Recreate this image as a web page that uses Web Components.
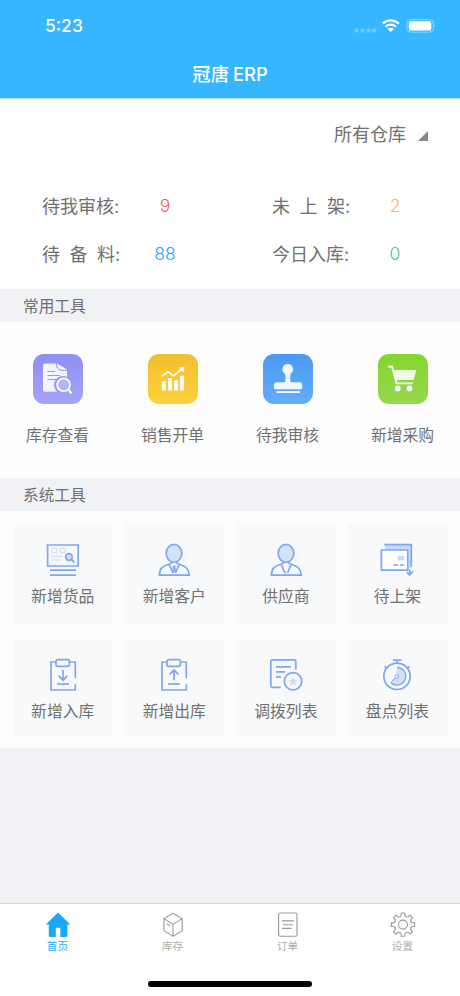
<!DOCTYPE html>
<html lang="zh-CN">
<head>
<meta charset="utf-8">
<title>冠唐 ERP</title>
<style>
html,body{margin:0;padding:0}
body{width:460px;height:996px;overflow:hidden;background:#f0f2f6;font-family:"Inter","Noto Sans CJK SC",sans-serif;font-weight:400;color:#707070}
</style>
</head>
<body>
<erp-app></erp-app>
<script>
const make = (name, html) => {
  const t = document.createElement('template');
  t.innerHTML = html;
  customElements.define(name, class extends HTMLElement {
    constructor() {
      super();
      this.attachShadow({ mode: 'open' }).append(t.content.cloneNode(true));
    }
    connectedCallback() {
      const g = this.shadowRoot.querySelector('[data-icon]');
      if (g) g.innerHTML = ICONS[this.getAttribute('icon')] || '';
    }
  });
};

const person = `<ellipse cx="20" cy="11.4" rx="7.8" ry="9" fill="#d3e2fc"/><path d="M15 22.2C9 23.7 5.4 26 5.4 33.2H35.2C35.2 26 31 23.7 25.2 22.2M15 22.2 19 31M25.2 22.2 21.6 31M15 22.2 18.2 20.5M25.2 22.2 22 20.5"/>`;
const board = `<path d="M13 5H8V33H32.3V27.2M32.3 21V5H27"/><rect x="13" y="2.6" width="13.4" height="6.8" rx="1.8"/><path d="M14.2 27H26"/>`;
const gear = (() => {
  let d = '';
  const P = (r, a) => (13 + r * Math.sin(a)).toFixed(2) + ' ' + (12.6 + r * Math.cos(a)).toFixed(2);
  for (let i = 0; i < 8; i++) {
    const a = i * Math.PI / 4;
    d += (i ? 'L' : 'M') + P(9.4, a - .2) + 'L' + P(11.8, a - .15) + 'L' + P(11.8, a + .15) + 'L' + P(9.4, a + .2) + 'Q' + P(7.6, a + .39) + ' ' + P(9.4, a + .585);
  }
  return d + 'Z';
})();

const ICONS = {
  stock: `<path d="M12 9.5H24L34 15.5V23A9 9 0 0 0 24 37.8H12A2 2 0 0 1 10 35.8V11.5A2 2 0 0 1 12 9.5Z" fill="#f4f4ff"/><path d="M23.4 9.5C23.4 15 26 17 34 16.2" stroke="#8f8ef2" stroke-width="1"/><path d="M14.5 17.5H22M14.5 21.5H27M14.5 25.5H23" stroke="#9695f3"/><circle cx="30.6" cy="30.8" r="7.4" fill="#9f9efa"/><circle cx="30.6" cy="30.8" r="6.4" fill="#b4b3fa" stroke="#fff" stroke-width="1.8"/><path d="M35.5 36 38.5 39.2" stroke="#fff" stroke-width="2.2"/>`,
  sales: `<path d="M13.7 27.2h4v9.3h-4zM20 24h4v12.5h-4zM26.1 26.3h4v10.2h-4zM32.1 21.8h4v14.7h-4z" fill="#fff"/><path d="M13.7 22.4 20 17.8 25.7 22 34.2 14.6" stroke="#fff" stroke-width="1.7"/><path d="M30.8 13.6 36.5 12.8 35.8 18.4Z" fill="#fff"/>`,
  stamp: `<path d="M24.8 10A5.3 5.3 0 0 0 22 19.8Q23.2 24 22 28.3H14A3 3 0 0 0 11 31.3V33.7A1.5 1.5 0 0 0 12.5 35.2H37.8A1.5 1.5 0 0 0 39.3 33.7V31.3A3 3 0 0 0 36.3 28.3H27.7Q26.5 24 27.6 19.8A5.3 5.3 0 0 0 24.8 10Z" fill="#f1f8ff"/><path d="M13.5 38H37" stroke="#fff" stroke-width="1.8"/>`,
  cart: `<path d="M15.4 16H38.4L35.6 25.9H18.2Z" fill="#f2fbe8"/><path d="M10.3 12.6H14L18.6 29.4H35" stroke="#fff" stroke-width="1.9"/><circle cx="19.8" cy="34.4" r="2.8" fill="#fff"/><circle cx="31.4" cy="34.4" r="2.8" fill="#fff"/>`,
  goods: `<path d="M4.6 3H35.2V24H4.6ZM7 28.2H33M7 33.2H33"/><g stroke="#c3d5f7" stroke-width=".9"><path d="M9 6.4h5v4H9zM17.4 6.4h5v4h-5zM8.2 14.3H20M8.2 18H18"/></g><circle cx="26" cy="15" r="3.3" fill="#d3e2fc"/><path d="M28.6 17.8 31.3 20.4" stroke-width="2"/>`,
  client: person + `<path d="M18.6 23.6H21.6L22 29 20.1 31.2 18.2 29Z" fill="#8db0f2" stroke="none"/>`,
  supplier: person + `<path d="M19 26.5 20.2 32H19Z" fill="#b6cdf8" stroke="none"/>`,
  shelf: `<path d="M8 2.8H34.2V26H31.5V7.6H8Z" fill="#c8dafb" stroke="none"/><path d="M7.3 2.7H34.3V25"/><path d="M4.4 8H30.8V28.2H4.4Z" fill="#fff"/><path d="M20.7 14h6.6v4.4h-6.6z" fill="#c8dafb" stroke="none"/><path d="M16.2 23h5M22.7 23h4.6M32.7 27.5V33M29.8 30.2 32.7 33 36 29.2"/>`,
  inbound: board + `<path d="M20 13V23M15.6 18.8 20 23.2 24.4 18.8"/>`,
  outbound: board + `<path d="M20 23.3V13.2M15.6 17.4 20 13 24.4 17.4"/>`,
  transfer: `<path d="M29.8 12.4V4.5A1.6 1.6 0 0 0 28.2 2.9H6.4A1.6 1.6 0 0 0 4.8 4.5V28.8A1.6 1.6 0 0 0 6.4 30.4H14.8M10 9.8H25M10 14.8H19M10 19.8H15"/><circle cx="27" cy="24.3" r="8.7"/><path d="M27 19.4 28.4 22.7 32 23 29.3 25.3 30.1 28.8 27 27 23.9 28.8 24.7 25.3 22 23 25.6 22.7Z" fill="#cfdffc" stroke="none"/>`,
  count: `<circle cx="20" cy="19.3" r="13.2"/><path d="M15.8 3.1H24.4M20 3.1V6M7.6 9.2 9.8 11.6M32.4 9.2 30.2 11.6"/><path d="M20 10.3A9 9 0 1 1 13.2 25.2L19.4 19.4Z" fill="#cfdffc" stroke="none"/><path d="M20 10.5A8.8 8.8 0 1 1 14 25.8" stroke-width="1.3"/><path d="M14.2 24.8 18.6 20.6" stroke-width="1"/><circle cx="19.8" cy="19.4" r="1.7" fill="#f7f9fb" stroke-width="1"/>`,
  home: `<path d="M13 .4 25.3 12.6H22.4V23.5A1.5 1.5 0 0 1 21 25H15.3V15.8H10.8V25H5.3A1.5 1.5 0 0 1 3.8 23.5V12.6H.8Z" fill="#18a9fb" stroke="none"/>`,
  box: `<path d="M13 1.2 22.2 6.6V18.6L13 24.4 3.9 18.6V6.6ZM3.9 6.6 13 12.4 22.2 6.6M13 12.4V24.4M6.8 12 10.2 13.9"/>`,
  order: `<rect x="3.6" y="1" width="18.4" height="23.2" rx="1.8"/><path d="M7 8.9H19M8 12.8H18M7 16.4H16.5"/>`,
  gear: `<path d="${gear}"/><circle cx="13" cy="12.6" r="4.5"/>`
};

make('status-bar', `<style>
:host{display:flex;height:51px;justify-content:space-between;align-items:center;padding:0 20px 0 45px;color:#fff;font:500 17.5px/20px "Inter",sans-serif}
svg{display:block}</style>
<span>5:23</span><svg width="87" height="20" viewBox="353 15.6 87 20" fill="#fff">
<g opacity=".28"><rect x="354.5" y="28" width="4" height="4" rx="1"/><rect x="360.5" y="28" width="4" height="4" rx="1"/><rect x="366.5" y="28" width="4" height="4" rx="1"/><rect x="372" y="28" width="4" height="4" rx="1"/></g>
<g fill="none" stroke="#fff" stroke-width="2.3"><path d="M382.6 23.2A11.8 11.8 0 0 1 398.8 23.2M385.5 26.4A7.4 7.4 0 0 1 395.9 26.4"/></g><path d="M387.6 28.6A4.4 4.4 0 0 1 393.8 28.6L390.7 31.7Z"/>
<rect x="407" y="19.3" width="26.4" height="12.4" rx="3.8" fill="none" stroke="#fff" opacity=".45"/><rect x="408.8" y="20.9" width="22.5" height="9.3" rx="2.2"/><path d="M434.7 23.5Q436.3 25.5 434.7 27.5Z" opacity=".55"/></svg>`);
make('app-header', `<style>
:host{display:block;height:97.5px;background:#35b6ff;border-bottom:1px solid #b4e3ff}
h1{margin:0;height:46px;display:flex;align-items:center;justify-content:center;color:#fff;font:500 18.4px/24px "Inter","Noto Sans CJK SC",sans-serif;word-spacing:-1px}</style>
<status-bar></status-bar><h1><slot></slot></h1>`);
make('warehouse-picker', `<style>
:host{display:flex;justify-content:flex-end;align-items:center;height:69px;padding:0 32px 1px 0;font-size:18px}
svg{margin:5px 0 0 12px}</style><slot></slot><svg width="10" height="10"><path d="M10 0V10H0Z" fill="#888"/></svg>`);
make('stat-item', `<style>
:host{display:flex;align-items:center;height:48px;font-size:18px;white-space:pre}
.l{width:108px;word-spacing:-.3px}.v{width:30px;padding-top:2px;text-align:center;color:var(--c);font-size:17.5px}
::slotted(b){font-weight:350}</style>
<span class="l"><slot></slot></span><span class="v"><slot name="value"></slot></span>`);
make('stat-grid', `<style>
:host{display:grid;grid-template-columns:230px 188px;padding:12px 0 11px 42px;background:#fff}</style><slot></slot>`);
make('section-title', `<style>
:host{display:flex;align-items:center;height:33px;padding-left:23px;background:#f0f2f6;font-size:15.7px}</style><slot></slot>`);
make('tool-button', `<style>
:host{display:flex;flex-direction:column;align-items:center;font-size:15.8px;line-height:24px;gap:20px}
i{display:block;width:50px;height:50px;border-radius:11px;background:var(--bg)}svg{display:block}</style>
<i><svg data-icon width="50" height="50" fill="none"></svg></i><span><slot></slot></span>`);
make('tool-row', `<style>
:host{display:grid;grid-template-columns:repeat(4,115px);box-sizing:border-box;height:155.5px;padding-top:32px;background:#fdfdfe}</style><slot></slot>`);
make('system-tile', `<style>
:host{display:flex;flex-direction:column;align-items:center;box-sizing:border-box;padding-top:18px;background:#f7f9fb;font-size:15.8px;line-height:24px;gap:7px}
svg{display:block}</style>
<svg data-icon width="40" height="36" fill="none" stroke="#7fa7f0" stroke-width="1.7"></svg><span><slot></slot></span>`);
make('tile-grid', `<style>
:host{display:grid;grid-template-columns:repeat(4,98.4px);grid-template-rows:99px 97px;column-gap:13.2px;row-gap:16px;padding:13px 0 12px 13.5px;background:#fdfdfe}
</style><slot></slot>`);
make('tab-item', `<style>
:host{display:flex;flex-direction:column;align-items:center;width:115px;color:#adadad;font-size:10.7px;line-height:14px;gap:2px}
:host([active]){color:#2badf9}svg{display:block}</style>
<svg data-icon width="26" height="26" fill="none" stroke="#999" stroke-width="1.1" stroke-linejoin="round"></svg><span><slot></slot></span>`);
make('tab-bar', `<style>
:host{display:flex;flex-direction:column;box-sizing:border-box;height:93px;border-top:1px solid #d8d9dc;background:#fff}
nav{display:flex;padding-top:8px;height:69px}
.h{width:164px;height:6px;border-radius:3px;background:#000;margin:0 auto}</style>
<nav><slot></slot></nav><div class="h"></div>`);
make('erp-app', `<style>
:host{display:flex;flex-direction:column;width:460px;height:996px;background:#f0f2f6}
.top{background:#fff;height:190.5px}tab-bar{margin-top:auto}</style>
<app-header>冠唐 ERP</app-header>
<div class="top"><warehouse-picker>所有仓库</warehouse-picker>
<stat-grid>
<stat-item style="--c:#f0605c">待我审核:<b slot="value">9</b></stat-item>
<stat-item style="--c:#f3ba45">未&nbsp; 上&nbsp; 架:<b slot="value">2</b></stat-item>
<stat-item style="--c:#2ba6f2">待&nbsp; 备&nbsp; 料:<b slot="value">88</b></stat-item>
<stat-item style="--c:#3fcaa0">今日入库:<b slot="value">0</b></stat-item>
</stat-grid></div>
<section-title>常用工具</section-title>
<tool-row>
<tool-button icon="stock" style="--bg:linear-gradient(#908ff4,#a5a4fb)">库存查看</tool-button>
<tool-button icon="sales" style="--bg:linear-gradient(#efc02d,#ffd13b)">销售开单</tool-button>
<tool-button icon="stamp" style="--bg:linear-gradient(#4a9af3,#64abfb)">待我审核</tool-button>
<tool-button icon="cart" style="--bg:linear-gradient(#83d52f,#98d74d)">新增采购</tool-button>
</tool-row>
<section-title>系统工具</section-title>
<tile-grid>
<system-tile icon="goods">新增货品</system-tile>
<system-tile icon="client">新增客户</system-tile>
<system-tile icon="supplier">供应商</system-tile>
<system-tile icon="shelf">待上架</system-tile>
<system-tile icon="inbound">新增入库</system-tile>
<system-tile icon="outbound">新增出库</system-tile>
<system-tile icon="transfer">调拨列表</system-tile>
<system-tile icon="count">盘点列表</system-tile>
</tile-grid>
<tab-bar>
<tab-item icon="home" active>首页</tab-item>
<tab-item icon="box">库存</tab-item>
<tab-item icon="order">订单</tab-item>
<tab-item icon="gear">设置</tab-item>
</tab-bar>`);
</script>
</body>
</html>
